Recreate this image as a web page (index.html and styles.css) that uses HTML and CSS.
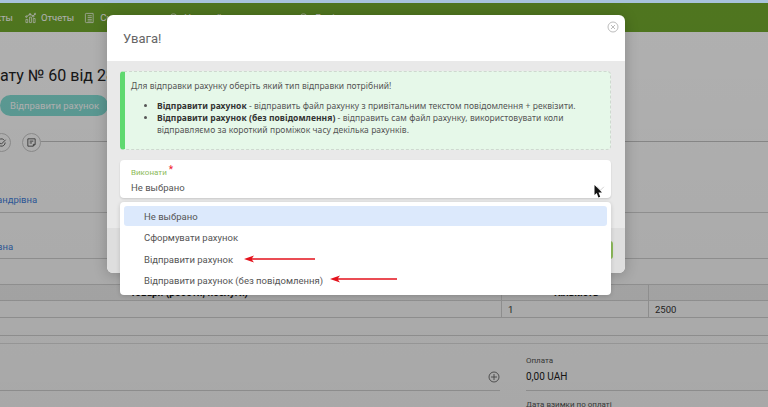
FILE: index.html
```html
<!DOCTYPE html>
<html lang="uk">
<head>
<meta charset="utf-8">
<title>Увага!</title>
<link rel="stylesheet" href="styles.css">
</head>
<body>
<div class="strip"></div>
<div class="stage">
  <div class="page">
    <nav class="nav">
      <span class="nav-item nav-first">кты</span>
      <span class="nav-item">
        <svg class="nav-icon" viewBox="0 0 12 12"><path d="M1 11V7.500h2V11zM5 11V5h2v6zM9 11V6.500h2V11zM1.500 4.500 5.500 2l3.500 2 2-2.500"/><circle cx="1.500" cy="4.500" r=".9"/><circle cx="5.500" cy="2" r=".9"/><circle cx="9" cy="4" r=".9"/><circle cx="11" cy="1.500" r=".8"/></svg>
        Отчеты
      </span>
      <span class="nav-item nav-docs">
        <svg class="nav-icon" viewBox="0 0 12 12"><path d="M2.500 1h7.500v10H2.500c-.8 0-1-.4-1-1V2c0-.6.2-1 1-1zM4 3.500h4.500M4 5.500h4.500M4 7.500h4.500M4 9.300h4.500"/></svg>
        Счета
      </span>
      <span class="nav-item nav-far">
        <svg class="nav-icon" viewBox="0 0 12 12"><circle cx="6" cy="6" r="4.500"/></svg>
        Настройки
      </span>
      <span class="nav-item nav-far">
        <svg class="nav-icon" viewBox="0 0 12 12"><circle cx="6" cy="6" r="4.500"/></svg>
        Довідка
      </span>
    </nav>
    <h1 class="title">ату № 60 від 28.01</h1>
    <div class="actions"><span class="send-btn">Відправити рахунок</span></div>
    <div class="steps">
      <span class="step step-cut">
        <svg viewBox="0 0 12 12"><path d="M10 6a4 4 0 1 1-1.500-3.100M4 6l1.800 1.800L10.500 3"/></svg>
      </span>
      <span class="step">
        <svg viewBox="0 0 12 12"><path d="M2 2h8v6l-2 2H2zM4 4.500h4M4 6.500h2.500M8 10V8h2"/></svg>
      </span>
      <span class="step-line"></span>
    </div>
    <div class="info info-one"><a class="person">андрівна</a></div>
    <div class="info info-two"><a class="person">вна</a></div>
    <div class="table">
      <div class="t-row t-head">
        <span class="t-name">Товари (роботи, послуги)</span>
        <span class="t-qty">Кількість</span>
        <span class="t-price"></span>
      </div>
      <div class="t-row t-body">
        <span class="t-name"></span>
        <span class="t-qty">1</span>
        <span class="t-price">2500</span>
      </div>
    </div>
    <div class="band"></div>
    <div class="band-thin"></div>
    <div class="summary">
      <div class="sum-left">
        <svg class="plus" viewBox="0 0 12 12"><circle cx="6" cy="6" r="5"/><path d="M6 3v6M3 6h6"/></svg>
      </div>
      <div class="sum-right">
        <span class="sum-label">Оплата</span>
        <span class="sum-value">0,00 UAH</span>
      </div>
    </div>
    <div class="due">
      <span class="due-label">Дата взимки по оплаті</span>
    </div>
  </div>

  <div class="overlay">
    <div class="modal">
      <header class="modal-head">
        <h2 class="modal-title">Увага!</h2>
        <svg class="close" viewBox="0 0 12 12"><circle cx="6" cy="6" r="5"/><path d="M4 4l4 4M8 4l-4 4"/></svg>
      </header>
      <div class="modal-body">
        <div class="alert">
          <p class="alert-lead">Для відправки рахунку оберіть який тип відправки потрібний!</p>
          <ul class="alert-list">
            <li><b>Відправити рахунок</b> - відправить файл рахунку з привітальним текстом повідомлення + реквізити.</li>
            <li><b>Відправити рахунок (без повідомлення)</b> - відправить сам файл рахунку, використовувати коли відправляємо за короткий проміжок часу декілька рахунків.</li>
          </ul>
        </div>
        <div class="field">
          <span class="field-label">Виконати <i class="req">*</i></span>
          <span class="field-value">Не выбрано</span>
          <svg class="chevron" viewBox="0 0 10 6"><path d="M1 1l4 4 4-4"/></svg>
          <svg class="cursor" viewBox="0 0 8 13"><path d="M.5 0v10l2.300-2 1.600 4.500 1.800-.7L4.500 7.500H8z"/></svg>
          <div class="dropdown">
            <div class="option option-active">Не выбрано</div>
            <div class="option">Сформувати рахунок</div>
            <div class="option">Відправити рахунок</div>
            <div class="option">Відправити рахунок (без повідомлення)</div>
            <svg class="arrow arrow-one" viewBox="0 0 71 8"><path d="M0 4 10 .5 8 3.300 71 3.300v1.400L8 4.700 10 7.500z"/></svg>
            <svg class="arrow arrow-two" viewBox="0 0 67 8"><path d="M0 4 10 .5 8 3.300 67 3.300v1.400L8 4.700 10 7.500z"/></svg>
          </div>
        </div>
      </div>
      <footer class="modal-foot"><span class="foot-btn"></span></footer>
    </div>
  </div>
</div>
</body>
</html>
```
FILE: styles.css
```css
* { box-sizing: border-box; }
html, body {
  margin: 0;
  height: 407px;
  overflow: hidden;
  background: #fff;
  font-family: Roboto, "Noto Sans", sans-serif;
  color: #333;
}
.strip { height: 3px; background: #a8c3dc; }
.stage { position: relative; height: 404px; overflow: hidden; }

/* page under the dimmer */
.page { display: flex; flex-direction: column; background: #fff; height: 100%; }
.nav {
  display: flex;
  align-items: center;
  height: 29px;
  background: #72aa2d;
  color: #fff;
  font-size: 9.500px;
  white-space: nowrap;
  flex: none;
}
.nav-item { display: flex; align-items: center; gap: 5px; margin-left: 12px; }
.nav-first { margin-left: 0; width: 13px; justify-content: flex-end; }
.nav-docs { margin-left: 10px; }
.nav-far { margin-left: 42px; width: 90px; }
.nav-far + .nav-far { margin-left: 40px; }
.nav-icon { width: 11px; height: 12px; fill: none; stroke: #fff; stroke-width: .8; }
.title {
  margin: 32px 0 0;
  font-size: 16px;
  font-weight: 400;
  line-height: 24px;
  height: 24px;
  color: #222;
  white-space: nowrap;
}
.actions { margin-top: 7px; height: 21px; display: flex; flex: none; }
.send-btn {
  width: 108px;
  background: #84ded5;
  color: #fff;
  font-size: 9.500px;
  line-height: 21px;
  padding-left: 10px;
  border-radius: 11px;
  white-space: nowrap;
}
.steps { margin-top: 16px; height: 20px; display: flex; align-items: center; flex: none; }
.step {
  flex: none;
  width: 19px;
  height: 19px;
  border: 1px solid #c9c9c9;
  border-radius: 50%;
  display: flex;
  align-items: center;
  justify-content: center;
  margin-right: 11px;
}
.step svg { width: 11px; height: 11px; fill: none; stroke: #555; stroke-width: 1; }
.step-cut { margin-left: -8px; }
.step-line { flex: 1; height: 1px; background: #c4c4c4; margin-left: -11px; margin-top: -1px; }
.info {
  flex: none;
  display: flex;
  align-items: flex-end;
  border-bottom: 1px solid #d2d2d2;
  font-size: 9.500px;
}
.info-one { height: 61px; padding-bottom: 7px; }
.info-two { height: 46px; padding-bottom: 6px; }
.person { color: #3f7fdd; margin-left: -3px; }
.table { margin-top: 25px; flex: none; }
.t-row {
  display: grid;
  grid-template-columns: 501px 147px 1fr;
  border-bottom: 1px solid #d4d4d4;
}
.t-head { height: 17px; background: #f3f3f3; border-top: 1px solid #d4d4d4; font-weight: 700; font-size: 10px; color: #111; line-height: 16px; }
.t-head .t-name { padding-left: 130px; }
.t-head .t-qty { padding-left: 52px; }
.t-body { height: 17px; font-size: 9.500px; line-height: 17px; }
.t-qty, .t-price { border-left: 1px solid #d4d4d4; padding-left: 6px; }
.band { height: 18px; flex: none; border-bottom: 1px solid #d4d4d4; }
.band-thin { height: 8px; flex: none; border-bottom: 1px solid #e0e0e0; }
.summary { display: flex; flex: none; height: 47px; }
.sum-left {
  width: 500px;
  border-bottom: 1px solid #d4d4d4;
  display: flex;
  justify-content: flex-end;
  align-items: center;
  padding: 19px 0 0;
}
.plus { width: 12px; height: 12px; fill: none; stroke: #555; stroke-width: .8; }
.sum-right {
  margin-left: 26px;
  flex: 1;
  border-bottom: 1px solid #d4d4d4;
  display: flex;
  flex-direction: column;
  padding-top: 11px;
}
.sum-label { font-size: 8px; line-height: 12px; color: #555; }
.sum-value { font-size: 10px; line-height: 14px; margin-top: 3px; color: #222; }
.due { padding: 8px 0 0 526px; flex: none; }
.due-label { display: block; font-size: 8px; line-height: 12px; color: #555; white-space: nowrap; }

/* dimmer + modal */
.overlay {
  position: absolute;
  inset: 0;
  background: linear-gradient(rgba(0,0,0,.31), rgba(0,0,0,.34));
  padding: 12px 0 0 107px;
}
.modal {
  width: 518px;
  height: 258px;
  border-radius: 6px;
  background: #fff;
  box-shadow: 0 2px 14px rgba(0,0,0,.22);
  display: flex;
  flex-direction: column;
}
.modal-head {
  position: relative;
  height: 46px;
  flex: none;
  display: flex;
  align-items: center;
  padding-left: 16px;
}
.modal-title { margin: 0; font-size: 13px; font-weight: 400; color: #666; }
.close {
  position: absolute;
  right: 6px;
  top: 6px;
  width: 12px;
  height: 12px;
  fill: none;
  stroke: #b4b4b4;
  stroke-width: .9;
}
.modal-body {
  position: relative;
  z-index: 1;
  flex: none;
  height: 167px;
  background: #e9e9e9;
  padding: 10px 14px 0 13px;
  display: flex;
  flex-direction: column;
  gap: 10px;
}
.alert {
  height: 79px;
  flex: none;
  background: #e6f8e9;
  border: 1px dashed #cfd8d0;
  border-left: 5px solid #5fd96f;
  border-radius: 4px;
  padding: 8px 6px 0 6px;
  font-family: "Noto Sans", sans-serif;
  font-size: 8.500px;
  letter-spacing: .05px;
  line-height: 12px;
  color: #555;
}
.alert-lead { margin: 0 0 8px; }
.alert-list { margin: 0; padding: 0 0 0 26px; }
.alert-list b { color: #333; font-weight: 700; }
.field {
  position: relative;
  height: 38px;
  flex: none;
  background: #fff;
  border-radius: 4px;
  box-shadow: 0 1px 2px rgba(0,0,0,.14);
  display: flex;
  flex-direction: column;
  padding: 6px 10px 0 11px;
}
.field-label { font-size: 8px; line-height: 11px; color: #8dbb5b; }
.req { color: #f0142a; font-style: normal; font-size: 10px; line-height: 8px; vertical-align: 2px; }
.field-value { font-size: 9.500px; line-height: 14px; margin-top: 3px; color: #555; }
.chevron {
  position: absolute;
  left: 476px;
  top: 26px;
  width: 9px;
  height: 5px;
  fill: none;
  stroke: #c8c8c8;
  stroke-width: 1;
}
.cursor {
  position: absolute;
  left: 474px;
  top: 25px;
  width: 8px;
  height: 13px;
  fill: #111;
  z-index: 2;
}
.dropdown {
  position: absolute;
  left: 0;
  right: 0;
  top: 42px;
  height: 93px;
  background: #fff;
  border-radius: 4px;
  box-shadow: 0 1px 4px rgba(0,0,0,.16);
  padding: 4px;
  display: flex;
  flex-direction: column;
  gap: 1.300px;
}
.option {
  height: 20px;
  flex: none;
  font-size: 9.500px;
  line-height: 20px;
  padding: 1px 0 0 20px;
  color: #555;
  border-radius: 3px;
  white-space: nowrap;
}
.option-active { background: #dce9fc; }
.arrow { position: absolute; height: 8px; fill: #e4121c; }
.arrow-one { left: 124px; top: 53px; width: 71px; }
.arrow-two { left: 210px; top: 73px; width: 67px; }
.modal-foot {
  flex: 1;
  background: #dedede;
  border-radius: 0 0 6px 6px;
  position: relative;
}
.foot-btn {
  position: absolute;
  left: 470px;
  top: 13px;
  width: 36px;
  height: 18px;
  background: #8dbb5b;
  border-radius: 3px;
}
```
